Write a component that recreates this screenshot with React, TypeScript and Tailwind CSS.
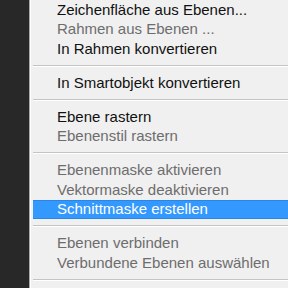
type Entry =
  | { kind: "item"; label: string; disabled?: boolean; active?: boolean }
  | { kind: "sep" };

const entries: Entry[] = [
  { kind: "item", label: "Zeichenfläche aus Ebenen..." },
  { kind: "item", label: "Rahmen aus Ebenen ...", disabled: true },
  { kind: "item", label: "In Rahmen konvertieren" },
  { kind: "sep" },
  { kind: "item", label: "In Smartobjekt konvertieren" },
  { kind: "sep" },
  { kind: "item", label: "Ebene rastern" },
  { kind: "item", label: "Ebenenstil rastern", disabled: true },
  { kind: "sep" },
  { kind: "item", label: "Ebenenmaske aktivieren", disabled: true },
  { kind: "item", label: "Vektormaske deaktivieren", disabled: true },
  { kind: "item", label: "Schnittmaske erstellen", active: true },
  { kind: "sep" },
  { kind: "item", label: "Ebenen verbinden", disabled: true },
  { kind: "item", label: "Verbundene Ebenen auswählen", disabled: true },
  { kind: "sep" },
];

export default function App() {
  return (
    <div className="flex w-[288px] h-[288px] overflow-hidden bg-[#f0f0f0] font-['Liberation_Sans',Arial,sans-serif]">
      {/* dark panel edge on the left */}
      <div className="w-[29px] shrink-0 bg-[#282828]" />
      <div className="w-px shrink-0 bg-[#a9a9a9]" />
      <div className="w-px shrink-0 bg-white" />

      {/* menu */}
      <div className="flex flex-1 flex-col pl-[2px]">
        {entries.map((e, i) =>
          e.kind === "sep" ? (
            <div key={i} className="flex h-[14.5px] shrink-0 flex-col justify-center">
              <div className="h-px bg-[#c4c4c4]" />
              <div className="h-px bg-white" />
            </div>
          ) : (
            <div
              key={i}
              className={
                e.active
                  ? "flex h-[19.5px] shrink-0 items-center border-y border-[#2a86e6] bg-[#3399ff] pl-[24px] text-[15px] text-white whitespace-nowrap"
                  : e.disabled
                  ? "flex h-[19.5px] shrink-0 items-center pl-[24px] text-[15px] text-[#6d6d6d] whitespace-nowrap"
                  : "flex h-[19.5px] shrink-0 items-center pl-[24px] text-[15px] text-[#111111] whitespace-nowrap"
              }
            >
              {e.label}
            </div>
          )
        )}
      </div>
    </div>
  );
}
